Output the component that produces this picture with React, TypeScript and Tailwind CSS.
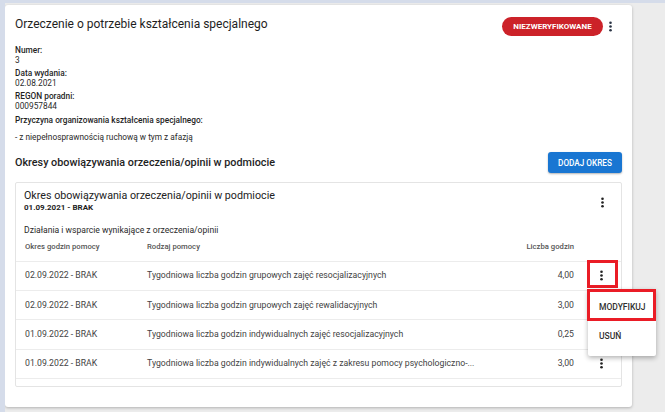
import { ReactNode } from "react";

const Kebab = ({ className = "" }: { className?: string }) => (
  <svg viewBox="0 0 24 24" className={`h-[15px] w-[15px] ${className}`} fill="currentColor">
    <circle cx="12" cy="6" r="2.1" />
    <circle cx="12" cy="12" r="2.1" />
    <circle cx="12" cy="18" r="2.1" />
  </svg>
);

const Field = ({ label, children }: { label: string; children: ReactNode }) => (
  <div className="mb-[3.8px]">
    <div className="text-[8.3px] leading-[9.3px] font-medium text-[#1f1f1f]">{label}</div>
    <div className="text-[8.3px] leading-[10px] text-[#2a2a2a]">{children}</div>
  </div>
);

const rows = [
  { period: "02.09.2022 - BRAK", kind: "Tygodniowa liczba godzin grupowych zajęć resocjalizacyjnych", hours: "4,00" },
  { period: "02.09.2022 - BRAK", kind: "Tygodniowa liczba godzin grupowych zajęć rewalidacyjnych", hours: "3,00" },
  { period: "01.09.2022 - BRAK", kind: "Tygodniowa liczba godzin indywidualnych zajęć resocjalizacyjnych", hours: "0,25" },
  { period: "01.09.2022 - BRAK", kind: "Tygodniowa liczba godzin indywidualnych zajęć z zakresu pomocy psychologiczno-...", hours: "3,00" },
];

export default function App() {
  return (
    <div
      className="relative w-[665px] h-[412px] overflow-hidden bg-[#ececec] border-t-[3px] border-l-[5px] border-[#d5dcea]"
      style={{ fontFamily: "Roboto, 'Liberation Sans', sans-serif" }}
    >
      <div className="mt-[2px] w-[627px] h-[402px] bg-white rounded-[3px] shadow-[0_1px_3px_rgba(0,0,0,0.25)] px-[10px] pt-[9px]">
        {/* header */}
        <div className="flex items-start justify-between">
          <h1 className="text-[12px] leading-[20px] text-[#1e1e1e]">
            Orzeczenie o potrzebie kształcenia specjalnego
          </h1>
          <div className="mt-[3px] mr-[4px] flex items-center">
            <span className="flex h-[19px] w-[101px] items-center justify-center rounded-full bg-[#cc2229] text-[8px] font-bold text-white">
              NIEZWERYFIKOWANE
            </span>
            <Kebab className="text-[#2b3444]" />
          </div>
        </div>

        {/* details */}
        <div className="mt-[9.5px]">
          <Field label="Numer:">3</Field>
          <Field label="Data wydania:">02.08.2021</Field>
          <Field label="REGON poradni:">000957844</Field>
          <div className="mt-[3.5px] text-[8.3px] leading-[10px] font-medium text-[#1f1f1f]">
            Przyczyna organizowania kształcenia specjalnego:
          </div>
          <div className="mt-[7px] text-[8.3px] leading-[10px] text-[#2a2a2a]">
            - z niepełnosprawnością ruchową w tym z afazją
          </div>
        </div>

        {/* periods */}
        <div className="mt-[10.5px] flex h-[21px] items-center justify-between">
          <h2 className="text-[10.8px] font-medium text-[#1e1e1e]">
            Okresy obowiązywania orzeczenia/opinii w podmiocie
          </h2>
          <button className="h-[21px] w-[74px] rounded-[3px] bg-[#1976d2] text-[8.2px] font-medium text-white shadow-[0_1px_2px_rgba(0,0,0,0.3)]">
            DODAJ OKRES
          </button>
        </div>

        <div className="mt-[8.5px] h-[205px] border border-[#e4e4e4] rounded-[2px]">
          <div className="flex items-start justify-between pl-[8px] pr-[11px] pt-[6.5px]">
            <div>
              <div className="text-[10.7px] leading-[14px] text-[#222]">
                Okres obowiązywania orzeczenia/opinii w podmiocie
              </div>
              <div className="text-[8px] leading-[10px] font-bold text-[#1e1e1e]">01.09.2021 - BRAK</div>
            </div>
            <Kebab className="mt-[6px] text-[#222]" />
          </div>
          <div className="pl-[8px] mt-[12px] text-[8.6px] leading-[10px] text-[#2a2a2a]">
            Działania i wsparcie wynikające z orzeczenia/opinii
          </div>

          {/* table header */}
          <div className="flex h-[26.3px] border-b border-[#ececec] pt-[6.5px] text-[7.7px] leading-[10px] font-medium text-[#555]">
            <div className="w-[131px] pl-[9px]">Okres godzin pomocy</div>
            <div className="flex-1">Rodzaj pomocy</div>
            <div className="w-[90px] text-right">Liczba godzin</div>
            <div className="w-[47px]" />
          </div>

          {rows.map((r, i) => (
            <div
              key={i}
              className="flex h-[29.4px] items-center border-b border-[#ececec] text-[8.7px] text-[#434343]"
            >
              <div className="w-[131px] pl-[9px]">{r.period}</div>
              <div className="flex-1 whitespace-nowrap">{r.kind}</div>
              <div className="w-[90px] text-right">{r.hours}</div>
              <div className="w-[47px] flex pl-[20px]">
                {i !== 1 && i !== 2 && <Kebab className="text-[#222]" />}
              </div>
            </div>
          ))}
        </div>
      </div>

      {/* highlighted kebab */}
      <div className="absolute left-[582px] top-[257px] h-[28px] w-[31px] border-[3px] border-[#ea1c26]" />

      {/* context menu */}
      <div className="absolute left-[583px] top-[286px] w-[68px] pt-[6px] pb-[2px] rounded-[2px] bg-white shadow-[0_2px_5px_rgba(0,0,0,0.3)] text-[8.5px] font-medium text-[#303030]">
        <div className="flex h-[24px] items-center pl-[11px]">MODYFIKUJ</div>
        <div className="flex h-[35px] items-center pl-[11px]">USUŃ</div>
      </div>
      <div className="absolute left-[582px] top-[286px] h-[32px] w-[69px] border-[3px] border-[#ea1c26]" />
    </div>
  );
}
